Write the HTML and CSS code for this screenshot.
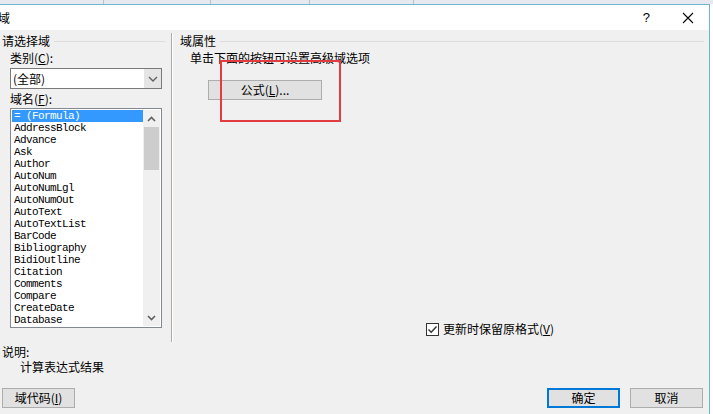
FILE: index.html
```html
<!DOCTYPE html>
<html lang="zh-CN">
<head>
    <meta charset="UTF-8">
    <meta name="viewport" content="width=device-width, initial-scale=1.0">
    <title>域</title>
    <link rel="stylesheet" href="styles.css">
</head>
<body>
    <!-- table header of the document behind the dialog -->
    <div class="strip">
        <span class="strip-cell"></span>
        <span class="strip-cell"></span>
        <span class="strip-cell"></span>
        <span class="strip-cell"></span>
    </div>

    <div class="dialog">
        <div class="titlebar">
            <span class="title">域</span>
            <span class="help">?</span>
            <span class="close">
                <svg width="12" height="12" viewBox="0 0 12 12">
                    <path d="M1 1 L11 11 M11 1 L1 11" stroke="#000" stroke-width="1.1" fill="none"/>
                </svg>
            </span>
        </div>

        <div class="main">
            <div class="pane pane-left">
                <div class="group-head"><span>请选择域</span></div>
                <div class="label">类别(<u>C</u>):</div>
                <div class="combo">
                    <span class="combo-value">(全部)</span>
                    <span class="combo-btn">
                        <svg width="10" height="6" viewBox="0 0 10 6">
                            <path d="M1 1 L5 5 L9 1" stroke="#606060" stroke-width="1.4" fill="none"/>
                        </svg>
                    </span>
                </div>
                <div class="label">域名(<u>F</u>):</div>
                <div class="listbox">
                    <ul class="list">
                        <li class="selected">= (Formula)</li>
                        <li>AddressBlock</li>
                        <li>Advance</li>
                        <li>Ask</li>
                        <li>Author</li>
                        <li>AutoNum</li>
                        <li>AutoNumLgl</li>
                        <li>AutoNumOut</li>
                        <li>AutoText</li>
                        <li>AutoTextList</li>
                        <li>BarCode</li>
                        <li>Bibliography</li>
                        <li>BidiOutline</li>
                        <li>Citation</li>
                        <li>Comments</li>
                        <li>Compare</li>
                        <li>CreateDate</li>
                        <li>Database</li>
                    </ul>
                    <div class="scrollbar">
                        <span class="arrow">
                            <svg width="9" height="6" viewBox="0 0 9 6">
                                <path d="M1 5 L4.5 1.5 L8 5" stroke="#606060" stroke-width="1.6" fill="none"/>
                            </svg>
                        </span>
                        <span class="thumb"></span>
                        <span class="arrow arrow-down">
                            <svg width="9" height="6" viewBox="0 0 9 6">
                                <path d="M1 1 L4.5 4.5 L8 1" stroke="#606060" stroke-width="1.6" fill="none"/>
                            </svg>
                        </span>
                    </div>
                </div>
            </div>

            <div class="pane pane-right">
                <div class="group-head"><span>域属性</span></div>
                <div class="hint">单击下面的按钮可设置高级域选项</div>
                <button class="btn btn-formula" type="button">公式(<u>L</u>)...</button>
                <div class="callout"></div>
                <label class="check">
                    <svg class="box" width="13" height="13" viewBox="0 0 13 13">
                        <rect x="0.5" y="0.5" width="12" height="12" fill="#fff" stroke="#333"/>
                        <path d="M2.5 6.5 L5.2 9.2 L10.5 3.5" stroke="#333" stroke-width="1.4" fill="none"/>
                    </svg>
                    <span>更新时保留原格式(<u>V</u>)</span>
                </label>
            </div>
        </div>

        <div class="desc">
            <div class="desc-title">说明:</div>
            <div class="desc-text">计算表达式结果</div>
        </div>

        <div class="footer">
            <button class="btn" type="button">域代码(<u>I</u>)</button>
            <div class="footer-right">
                <button class="btn btn-default" type="button">确定</button>
                <button class="btn" type="button">取消</button>
            </div>
        </div>
    </div>
</body>
</html>
```

FILE: styles.css
```css
body {
    margin: 0;
    background: #fff;
    font-family: "Noto Sans CJK SC", "Noto Sans", sans-serif;
    font-size: 12px;
    color: #000;
    overflow: hidden;
}
u {
    text-decoration: underline;
}
.strip {
    display: flex;
    height: 4px;
    background: #e6eaee;
    overflow: hidden;
}
.strip-cell {
    width: 103px;
    border-right: 1px solid #b9c2cc;
}
.strip-cell:nth-child(2) {
    width: 106px;
}
.strip-cell:nth-child(3) {
    width: 98px;
}
.dialog {
    width: 710px;
    height: 410px;
    box-sizing: border-box;
    border-top: 1px solid #6cb4d4;
    border-right: 1px solid #6cb4d4;
    background: #f0f0f0;
    display: flex;
    flex-direction: column;
}
.titlebar {
    height: 25px;
    background: #fff;
    display: flex;
    align-items: center;
    flex-shrink: 0;
}
.title {
    margin-left: -2px;
    line-height: 14px;
}
.help {
    margin-left: auto;
    margin-right: 32px;
    font-family: "Liberation Sans", sans-serif;
    font-size: 13px;
}
.close {
    display: flex;
    margin-right: 15px;
}
.main {
    display: flex;
    height: 312px;
    flex-shrink: 0;
}
.pane {
    padding-top: 4px;
    box-sizing: border-box;
}
.pane-left {
    width: 172px;
    padding-left: 2px;
    border-right: 1px solid #a9a9a9;
    box-shadow: 1px 0 0 #fff;
    margin-top: 3px;
    padding-top: 1px;
}
.pane-right {
    flex: 1;
    padding-left: 8px;
    padding-right: 5px;
    position: relative;
    display: flex;
    flex-direction: column;
    align-items: flex-start;
}
.group-head {
    display: flex;
    align-items: center;
    height: 14px;
    line-height: 14px;
    width: 100%;
}
.pane-left .group-head {
    width: 163px;
}
.group-head::after {
    content: "";
    flex: 1;
    border-top: 1px solid #dcdcdc;
    margin-left: 4px;
}
.label {
    margin-top: 3px;
    padding-left: 8px;
    line-height: 14px;
}
.label + .listbox {
    margin-top: 2px;
}
.combo {
    margin: 3px 0 2px 8px;
    width: 152px;
    height: 21px;
    box-sizing: border-box;
    border: 1px solid #7a7a7a;
    background: #fff;
    display: flex;
}
.combo-value {
    flex: 1;
    padding-left: 2px;
    line-height: 19px;
}
.combo-btn {
    width: 17px;
    background: #e5e5e5;
    display: flex;
    align-items: center;
    justify-content: center;
}
.listbox {
    margin-left: 8px;
    width: 152px;
    height: 220px;
    box-sizing: border-box;
    border: 1px solid #828790;
    background: #fff;
    padding: 1px;
    display: flex;
}
.list {
    list-style: none;
    margin: 0;
    padding: 0;
    flex: 1;
    font-family: "Liberation Mono", monospace;
    font-size: 11px;
    letter-spacing: -0.6px;
    line-height: 12px;
}
.list li {
    padding-left: 2px;
    height: 12px;
    white-space: nowrap;
}
.list .selected {
    background: #3399ff;
    color: #fff;
}
.scrollbar {
    width: 17px;
    background: #f0f0f0;
    display: flex;
    flex-direction: column;
    align-items: center;
}
.arrow {
    height: 17px;
    display: flex;
    align-items: center;
    justify-content: center;
}
.arrow-down {
    margin-top: auto;
}
.thumb {
    width: 15px;
    height: 43px;
    background: #cdcdcd;
}
.hint {
    margin-top: 3px;
    padding-left: 10px;
    line-height: 14px;
}
.btn {
    font-family: inherit;
    font-size: 12px;
    height: 20px;
    width: 74px;
    padding: 0;
    background: #e1e1e1;
    border: 1px solid #adadad;
    color: #000;
    line-height: 16px;
}
.btn-formula {
    margin-top: 15px;
    margin-left: 28px;
    width: 114px;
}
.btn-default {
    border-color: #0078d7;
    box-shadow: inset 0 0 0 1px #0078d7;
}
.callout {
    position: absolute;
    left: 48px;
    top: 30px;
    width: 121px;
    height: 62px;
    box-sizing: border-box;
    border: 2px solid #e23b40;
}
.check {
    margin-top: auto;
    margin-bottom: 6px;
    margin-left: 246px;
    display: flex;
    align-items: center;
    gap: 4px;
    line-height: 14px;
}
.box {
    display: block;
}
.desc {
    padding-left: 2px;
    margin-top: 3px;
    line-height: 14px;
}
.desc-text {
    padding-left: 18px;
    margin-top: 1px;
}
.footer {
    display: flex;
    justify-content: space-between;
    margin-top: 14px;
    padding: 0 6px 0 2px;
}
.footer .btn {
    width: 73px;
}
.footer-right {
    display: flex;
    gap: 10px;
}
```
